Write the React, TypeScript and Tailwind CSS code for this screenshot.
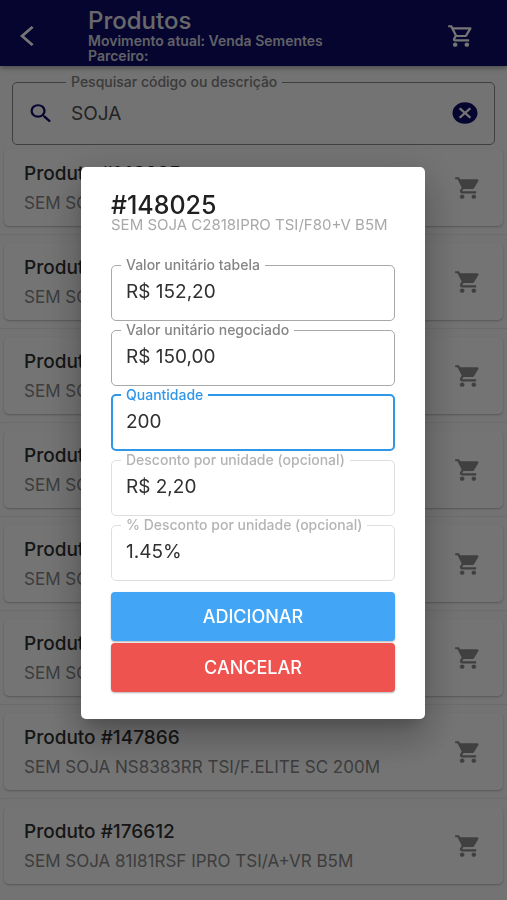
import { useState } from "react";
import {
  MdArrowBackIos,
  MdCancel,
  MdOutlineShoppingCart,
  MdSearch,
  MdShoppingCart,
} from "react-icons/md";

const products = [
  { code: "148025", name: "SEM SOJA C2818IPRO TSI/F80+V B5M" },
  { code: "148026", name: "SEM SOJA C2818IPRO TSI/F80+V SC" },
  { code: "148027", name: "SEM SOJA C2827IPRO TSI/F80+V B5M" },
  { code: "148028", name: "SEM SOJA C2827IPRO TSI/F80+V SC" },
  { code: "147864", name: "SEM SOJA NS8383RR TSI/A+VR B5M" },
  { code: "147865", name: "SEM SOJA NS8383RR TSI/A+VR SC" },
  { code: "147866", name: "SEM SOJA NS8383RR TSI/F.ELITE SC 200M" },
  { code: "176612", name: "SEM SOJA 81I81RSF IPRO TSI/A+VR B5M" },
];

type Tone = "normal" | "focused" | "light";

type FieldProps = {
  id: string;
  label: string;
  value: string;
  tone?: Tone;
  onChange: (value: string) => void;
};

const borders = {
  normal: "border border-[#a8a8a8] px-[14px]",
  focused: "border-2 border-[#2f96e8] px-[13px]",
  light: "border border-[#dedede] px-[14px]",
};

const labels = {
  normal: "text-[#858585]",
  focused: "text-[#2f96e8]",
  light: "text-[#b4b4b4]",
};

function Field({ id, label, value, tone = "normal", onChange }: FieldProps) {
  return (
    <fieldset className={`h-16 min-w-0 rounded-[5px] ${borders[tone]}`}>
      <legend className="-ml-[5px] px-[5px] text-[14px] leading-4 font-medium">
        <label htmlFor={id} className={`block ${labels[tone]}`}>
          {label}
        </label>
      </legend>
      <input
        id={id}
        value={value}
        onChange={(e) => onChange(e.target.value)}
        className="block h-9 w-full bg-transparent text-[19px] text-[#303030] outline-none"
      />
    </fieldset>
  );
}

function ProductCard({ code, name }: { code: string; name: string }) {
  return (
    <li className="border-t border-[#ececec] px-1 py-2 first:border-t-0 first:pt-1">
      <div className="flex h-[77px] items-center rounded-[5px] bg-[#fdfdfd] pr-[21px] pl-5 shadow-[0_1px_2px_rgba(0,0,0,0.25)]">
        <div className="min-w-0 flex-1">
          <h2 className="truncate text-[19px] leading-6 font-medium text-[#303030]">Produto #{code}</h2>
          <p className="mt-[7px] truncate text-[17px] leading-5 text-[#858585]">{name}</p>
        </div>
        <button type="button" aria-label="Adicionar ao carrinho" className="text-[#8c8c8c]">
          <MdShoppingCart preserveAspectRatio="none" className="h-[26px] w-7" />
        </button>
      </div>
    </li>
  );
}

export default function App() {
  const [search, setSearch] = useState("SOJA");
  const [tablePrice, setTablePrice] = useState("R$ 152,20");
  const [price, setPrice] = useState("R$ 150,00");
  const [quantity, setQuantity] = useState("200");
  const [discount, setDiscount] = useState("R$ 2,20");
  const [percent, setPercent] = useState("1.45%");

  return (
    <div className="min-h-screen bg-[#fafafa] font-['Inter',sans-serif]">
      <header className="relative flex h-[66px] items-center bg-[#0b0c68] pr-8 pl-5 text-white shadow-[0_2px_5px_rgba(0,0,0,0.35)]">
        <button type="button" aria-label="Voltar" className="mt-[6px] w-[68px]">
          <MdArrowBackIos preserveAspectRatio="none" className="h-6 w-7" />
        </button>
        <div className="min-w-0 flex-1 pt-[6px]">
          <h1 className="text-[24px] leading-6 font-medium text-[#e4e4ec]">Produtos</h1>
          <p className="text-[14px] leading-[15px] font-semibold text-[#d4d4de]">Movimento atual: Venda Sementes</p>
          <p className="text-[14px] leading-[15px] font-semibold text-[#d4d4de]">Parceiro:</p>
        </div>
        <button type="button" aria-label="Carrinho" className="mt-[6px]">
          <MdOutlineShoppingCart preserveAspectRatio="none" className="h-[26px] w-7" />
        </button>
      </header>

      <main>
        <div className="px-3 pt-2">
          <fieldset className="h-[71px] min-w-0 rounded-[5px] border border-[#8a8a8a] px-[14px]">
            <legend className="ml-[39px] px-[5px] text-[14px] leading-4 font-medium text-[#808080]">
              <label htmlFor="search" className="block">
                Pesquisar código ou descrição
              </label>
            </legend>
            <div className="flex h-[46px] items-center">
              <MdSearch preserveAspectRatio="none" className="h-[25px] w-7 text-[#0b0c68]" />
              <input
                id="search"
                value={search}
                onChange={(e) => setSearch(e.target.value)}
                className="ml-4 h-full min-w-0 flex-1 bg-transparent text-[19px] text-[#505050] outline-none"
              />
              <button
                type="button"
                aria-label="Limpar pesquisa"
                onClick={() => setSearch("")}
                className="text-[#0b0c68]"
              >
                <MdCancel preserveAspectRatio="none" className="h-[26px] w-[30px]" />
              </button>
            </div>
          </fieldset>
        </div>

        <ul>
          {products.map((product) => (
            <ProductCard key={product.code} {...product} />
          ))}
        </ul>
      </main>

      <div className="fixed inset-0 flex items-center justify-center bg-black/54 pr-[82px] pb-[14px] pl-[81px]">
        <form
          role="dialog"
          aria-labelledby="dialog-title"
          onSubmit={(e) => e.preventDefault()}
          className="w-full rounded-[5px] bg-white px-[30px] pt-[26px] pb-[27px] shadow-[0_10px_15px_-6px_rgba(0,0,0,0.2),0_22px_36px_3px_rgba(0,0,0,0.14),0_8px_44px_8px_rgba(0,0,0,0.12)]"
        >
          <h2 id="dialog-title" className="text-[25px] leading-6 font-medium text-[#202020]">
            #148025
          </h2>
          <p className="text-[15px] leading-4 text-[#a8a8a8]">SEM SOJA C2818IPRO TSI/F80+V B5M</p>

          <div className="mt-6 flex flex-col gap-px">
            <Field id="table-price" label="Valor unitário tabela" value={tablePrice} onChange={setTablePrice} />
            <Field id="price" label="Valor unitário negociado" value={price} onChange={setPrice} />
            <Field id="quantity" label="Quantidade" value={quantity} tone="focused" onChange={setQuantity} />
            <Field
              id="discount"
              label="Desconto por unidade (opcional)"
              value={discount}
              tone="light"
              onChange={setDiscount}
            />
            <Field
              id="percent"
              label="% Desconto por unidade (opcional)"
              value={percent}
              tone="light"
              onChange={setPercent}
            />
          </div>

          <div className="mt-[11px] flex flex-col gap-[2px] text-[18px] font-medium text-white">
            <button type="submit" className="h-[49px] rounded-[4px] bg-[#42a5f5] shadow-[0_1px_2px_rgba(0,0,0,0.3)]">
              ADICIONAR
            </button>
            <button type="button" className="h-[49px] rounded-[4px] bg-[#ef5350] shadow-[0_1px_2px_rgba(0,0,0,0.3)]">
              CANCELAR
            </button>
          </div>
        </form>
      </div>
    </div>
  );
}
